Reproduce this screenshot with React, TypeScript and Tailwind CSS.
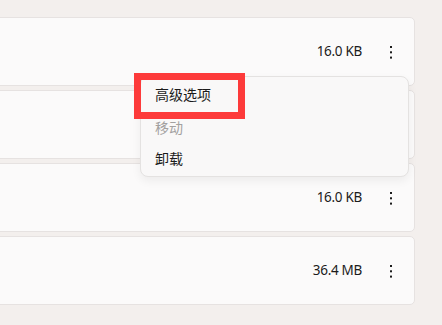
import React from 'react'

const ROWS = [
  { size: '16.0 KB' },
  { size: '' },
  { size: '16.0 KB' },
  { size: '36.4 MB' },
]

const MENU = [
  { label: '高级选项', h: 'h-[32px]', disabled: false },
  { label: '移动', h: 'h-[35px]', disabled: true },
  { label: '卸载', h: 'h-[27px]', disabled: false },
]

function Dots() {
  return (
    <svg width="4" height="14" viewBox="0 0 4 14" fill="#1b1b1b">
      <rect x="1" y="1" width="2" height="2" />
      <rect x="1" y="6.3" width="2" height="2" />
      <rect x="1" y="11.6" width="2" height="2" />
    </svg>
  )
}

export default function App() {
  return (
    <div
      className="relative w-[442px] h-[325px] overflow-hidden bg-[#f3efed] text-[#1b1b1b]"
      style={{ fontFamily: '"Noto Sans", "Noto Sans CJK SC", sans-serif' }}
    >
      <div className="flex flex-col gap-[4px] pt-[17px] -ml-3 mr-[27px]">
        {ROWS.map((r, i) => (
          <div
            key={i}
            className="h-[69px] flex items-center justify-end gap-[13px] pr-[7px] bg-[#fbfafa] border border-[#e6e2e1] rounded-[5px]"
          >
            {r.size && <span className="text-[13.5px] leading-none tracking-[-0.3px]">{r.size}</span>}
            {r.size && (
              <button className="w-[32px] h-[32px] flex items-center justify-center">
                <Dots />
              </button>
            )}
          </div>
        ))}
      </div>

      <div className="absolute left-[140px] top-[76px] w-[269px] h-[101px] py-px bg-[#f9f8f8] border border-[#e4e2e1] rounded-[8px] shadow-[0_4px_10px_rgba(0,0,0,0.06)] flex flex-col">
        {MENU.map(m => (
          <div
            key={m.label}
            className={`${m.h} flex items-center pl-[14px] text-[14px] ${m.disabled ? 'text-[#a3a1a0]' : 'text-[#1b1b1b]'}`}
          >
            {m.label}
          </div>
        ))}
      </div>

      <div className="absolute left-[134px] top-[73px] w-[111px] h-[46px] border-[7px] border-[#fd3a3a]" />
    </div>
  )
}
